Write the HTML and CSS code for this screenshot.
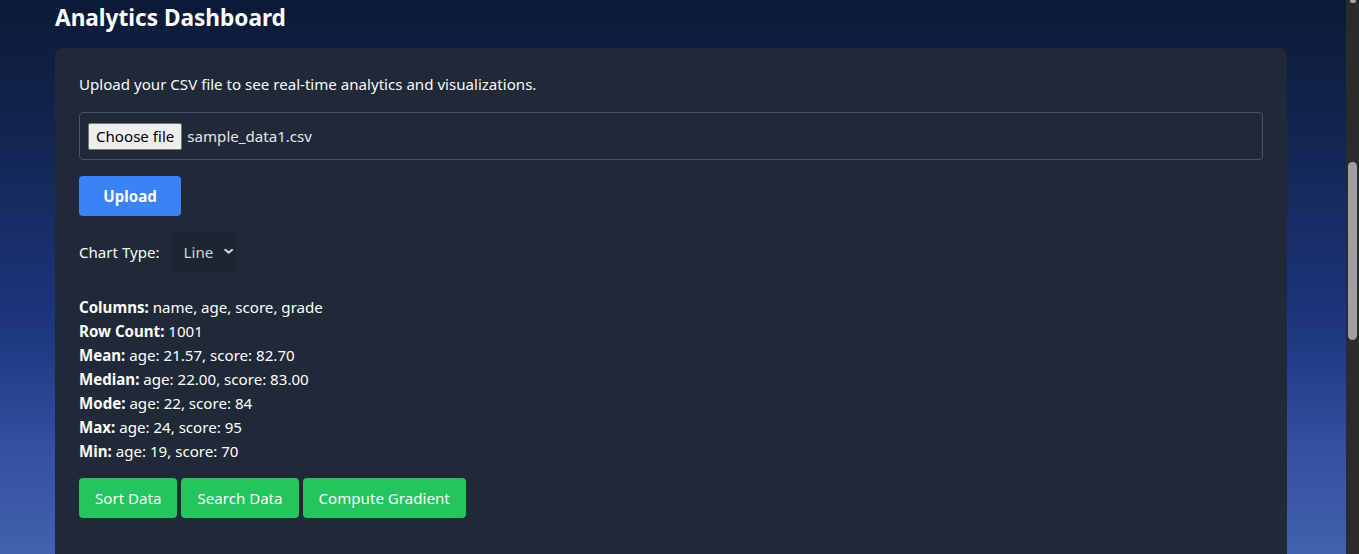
FILE: index.html
```html
<!DOCTYPE html>
<html lang="en">
<head>
<meta charset="utf-8">
<title>Analytics Dashboard</title>
<link rel="stylesheet" href="styles.css">
</head>
<body>
<div class="viewport">
  <div class="page">
    <h1 class="title">Analytics Dashboard</h1>
    <div class="card">
      <p class="intro">Upload your CSV file to see real-time analytics and visualizations.</p>
      <div class="file-box">
        <span class="file-btn">Choose file</span>
        <span class="file-name">sample_data1.csv</span>
      </div>
      <button class="btn-upload">Upload</button>
      <div class="chart-row">
        <span class="chart-label">Chart Type:</span>
        <div class="select">
          <span>Line</span>
          <svg class="chev" width="11" height="7" viewBox="0 0 11 7"><path d="M1.5 1.5 L5.5 5 L9.5 1.5" fill="none" stroke="#d1d5db" stroke-width="2.4" stroke-linecap="round" stroke-linejoin="round"/></svg>
        </div>
      </div>
      <div class="stats">
        <div><b>Columns:</b> name, age, score, grade</div>
        <div><b>Row Count:</b> 1001</div>
        <div><b>Mean:</b> age: 21.57, score: 82.70</div>
        <div><b>Median:</b> age: 22.00, score: 83.00</div>
        <div><b>Mode:</b> age: 22, score: 84</div>
        <div><b>Max:</b> age: 24, score: 95</div>
        <div><b>Min:</b> age: 19, score: 70</div>
      </div>
      <div class="actions">
        <button class="btn-green">Sort Data</button>
        <button class="btn-green">Search Data</button>
        <button class="btn-green">Compute Gradient</button>
      </div>
    </div>
  </div>
  <div class="scrollbar">
    <div class="sb-arrow"></div>
    <div class="sb-thumb"></div>
  </div>
</div>
</body>
</html>
```
FILE: styles.css
```css
html, body {
  margin: 0;
  padding: 0;
  height: 100%;
  overflow: hidden;
}
body {
  font-family: "Noto Sans", "Segoe UI", sans-serif;
  font-size: 15.1px;
  line-height: 24px;
  color: #f9fafb;
  background: #1a2f6b;
}
.viewport {
  display: flex;
  height: 554px;
}
.page {
  flex: 1;
  padding-left: 55px;
  background: linear-gradient(to bottom, #0b1a35 0%, #142858 30%, #1d3780 60%, #3551a0 82%, #4262ad 100%);
  overflow: hidden;
}
.title {
  margin: 0;
  padding-top: 2px;
  height: 48px;
  box-sizing: border-box;
  font-size: 22.6px;
  line-height: 32px;
  font-weight: 700;
  color: #ffffff;
}
.card {
  width: 1232px;
  box-sizing: border-box;
  background: #1f2937;
  border-radius: 8px;
  padding: 24px;
  height: 560px;
}
.intro {
  margin: 0 0 16px 0;
}
.file-box {
  display: flex;
  align-items: center;
  height: 48px;
  box-sizing: border-box;
  border: 1px solid #4b5563;
  border-radius: 4px;
  padding: 0 8px;
}
.file-btn {
  background: #efefef;
  color: #000;
  border: 1px solid #767676;
  border-radius: 2px;
  height: 27px;
  box-sizing: border-box;
  padding: 0 7px;
  display: flex;
  align-items: center;
  line-height: 20px;
  margin-right: 5px;
}
.file-name {
  color: #e5e7eb;
}
.btn-upload {
  display: block;
  margin-top: 16px;
  height: 40px;
  width: 102px;
  border: 0;
  border-radius: 4px;
  background: #3b82f6;
  color: #fff;
  font: inherit;
  font-weight: 700;
  padding: 0;
}
.chart-row {
  display: flex;
  align-items: center;
  margin-top: 17px;
  height: 38px;
  gap: 12px;
}
.select {
  display: flex;
  align-items: center;
  height: 38px;
  box-sizing: border-box;
  padding: 0 2px 0 12px;
  background: #1d2532;
  color: #d1d5db;
  gap: 11px;
  width: 64px;
}
.chev {
  display: block;
  margin-top: -1px;
}
.stats {
  margin-top: 24px;
  color: #ffffff;
}
.stats b {
  font-weight: 700;
}
.actions {
  display: flex;
  gap: 4px;
  margin-top: 15px;
}
.btn-green {
  height: 40px;
  padding: 0 16px;
  border: 0;
  border-radius: 4px;
  background: #22c55e;
  color: #fff;
  font: inherit;
}
.scrollbar {
  width: 13px;
  background: #2b2b2b;
  display: flex;
  flex-direction: column;
  align-items: center;
}
.sb-arrow {
  width: 6px;
  height: 3px;
  background: #a3a3a3;
  border-radius: 0 0 2px 2px;
}
.sb-thumb {
  margin-top: 159px;
  width: 9px;
  height: 178px;
  border-radius: 5px;
  background: #9f9f9f;
}
```
